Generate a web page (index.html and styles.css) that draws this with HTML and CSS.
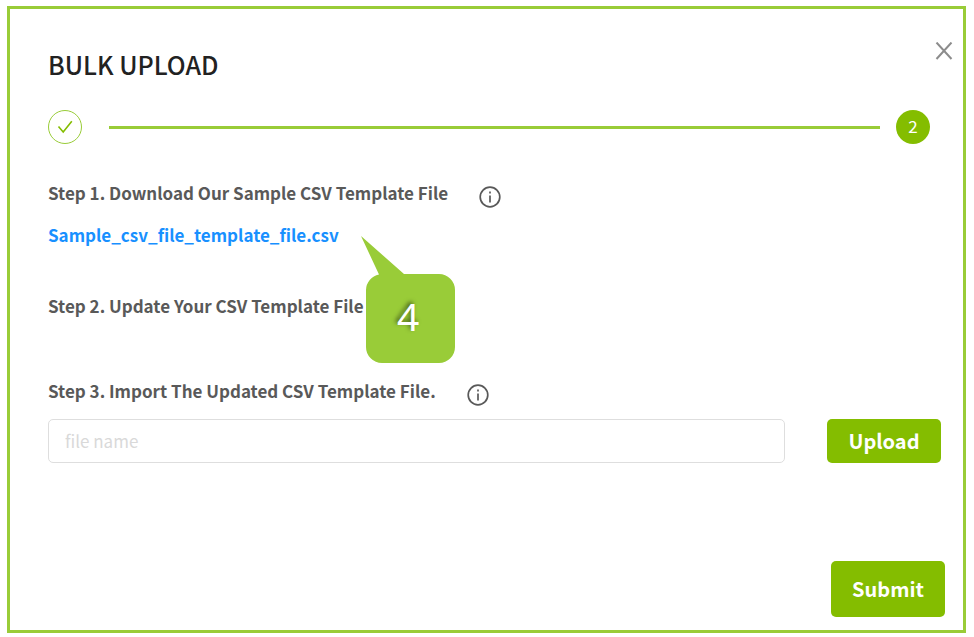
FILE: index.html
```html
<!DOCTYPE html>
<html lang="en">
<head>
    <meta charset="UTF-8">
    <meta name="viewport" content="width=device-width, initial-scale=1.0">
    <title>Bulk Upload</title>
    <link rel="stylesheet" href="styles.css">
</head>
<body>
    <main class="modal">
        <header class="modal-header">
            <h1>BULK UPLOAD</h1>
            <button type="button" class="close" aria-label="Close">
                <svg width="18" height="18" viewBox="0 0 18 18"><path d="M1.5 0.5 L16.5 17 M16.5 0.5 L1.5 17"/></svg>
            </button>
        </header>

        <div class="stepper">
            <div class="step-dot done">
                <svg width="16" height="14" viewBox="0 0 16 14"><path d="M1.5 6.5 L6.2 12 L14.8 1.2"/></svg>
            </div>
            <div class="step-line"></div>
            <div class="step-dot current">2</div>
        </div>

        <form class="upload-form">
            <div class="step">
                <h2>Step 1. Download Our Sample CSV Template File</h2>
                <svg class="info" width="22" height="22" viewBox="0 0 22 22"><circle cx="11" cy="11" r="9.8"/><path d="M11 9.5 V16.5 M11 5.5 V7.5"/></svg>
            </div>
            <div class="sample">
                <a href="#">Sample_csv_file_template_file.csv</a>
                <div class="callout">
                    <svg width="94" height="127" viewBox="0 0 94 127"><path d="M0 0 L43 38 H78 A16 16 0 0 1 94 54 V111 A16 16 0 0 1 78 127 H21 A16 16 0 0 1 5 111 V54 A16 16 0 0 1 18 38.5 Z"/></svg>
                    <span>4</span>
                </div>
            </div>
            <div class="step step-two">
                <h2>Step 2. Update Your CSV Template File</h2>
            </div>
            <div class="step step-three">
                <h2><label for="file-name">Step 3. Import The Updated CSV Template File.</label></h2>
                <svg class="info" width="22" height="22" viewBox="0 0 22 22"><circle cx="11" cy="11" r="9.8"/><path d="M11 9.5 V16.5 M11 5.5 V7.5"/></svg>
            </div>
            <div class="file-row">
                <input type="text" id="file-name" placeholder="file name">
                <button type="button" class="btn">Upload</button>
            </div>
            <div class="actions">
                <button type="submit" class="btn btn-submit">Submit</button>
            </div>
        </form>
    </main>
</body>
</html>
```

FILE: styles.css
```css
* {
    box-sizing: border-box;
}
body {
    margin: 0;
    padding: 6px 8px 4px 7px;
    background: #ffffff;
    font-family: "Noto Sans CJK SC", "Open Sans", sans-serif;
    color: #595959;
}
.modal {
    min-height: calc(100vh - 10px);
    border: 3px solid #99cc38;
    padding: 33px 18px 13px 38px;
}
.modal-header {
    display: flex;
    justify-content: space-between;
    align-items: flex-start;
}
h1 {
    margin: 6px 0 0;
    font-size: 25px;
    font-weight: 500;
    line-height: 32px;
    color: #222222;
}
.close {
    display: flex;
    margin-right: -8px;
    padding: 0;
    border: 0;
    background: none;
    cursor: pointer;
}
.close path {
    fill: none;
    stroke: #8c8c8c;
    stroke-width: 2;
}
.stepper {
    display: flex;
    align-items: center;
    margin: 30px 15px 0 0;
}
.step-dot {
    display: flex;
    justify-content: center;
    align-items: center;
    width: 34px;
    height: 34px;
    border-radius: 50%;
}
.done {
    border: 1px solid #99cc38;
}
.done path {
    fill: none;
    stroke: #84bd00;
    stroke-width: 1.6;
}
.current {
    padding-bottom: 2px;
    background: #84bd00;
    color: #ffffff;
    font-size: 17px;
    line-height: 24px;
}
.step-line {
    flex: 1;
    height: 3px;
    margin: 0 16px 0 27px;
    background: #99cc38;
}
.upload-form {
    margin-top: 34px;
}
.step {
    display: flex;
    align-items: flex-start;
    gap: 31px;
}
h2 {
    margin: 0;
    font-size: 17px;
    font-weight: 700;
    line-height: 30px;
}
.info {
    margin-top: 8px;
    fill: none;
    stroke: #595959;
    stroke-width: 1.7;
}
.sample {
    display: flex;
    width: fit-content;
    position: relative;
    margin-top: 12px;
}
.sample a {
    color: #1890ff;
    font-size: 17px;
    font-weight: 700;
    line-height: 30px;
    text-decoration: none;
}
.step-two {
    margin-top: 41px;
}
.step-three {
    margin-top: 55px;
}
/* numbered marker pointing at the sample file */
.callout {
    position: absolute;
    top: 16px;
    left: calc(100% + 22px);
    width: 94px;
    height: 127px;
}
.callout svg {
    display: block;
    fill: #99cc38;
}
.callout span {
    position: absolute;
    inset: 38px 4px 0 5px;
    color: #ffffff;
    font-family: "Noto Sans", sans-serif;
    font-size: 39px;
    line-height: 84px;
    text-align: center;
    text-shadow: -2px -2px 4px rgba(0, 0, 0, 0.5);
}
.file-row {
    display: flex;
    gap: 42px;
    margin: 13px 4px 0 0;
}
.file-row input {
    flex: 1;
    min-width: 0;
    height: 44px;
    padding: 0 16px 2px;
    border: 1px solid #dedede;
    border-radius: 5px;
    font-family: inherit;
    font-size: 17px;
    color: #595959;
}
.file-row input::placeholder {
    color: #d9d9d9;
}
.btn {
    width: 114px;
    height: 44px;
    padding: 0 0 2px;
    border: 0;
    border-radius: 5px;
    background: #84bd00;
    color: #ffffff;
    font-family: inherit;
    font-size: 20px;
    font-weight: 700;
    cursor: pointer;
}
.actions {
    display: flex;
    justify-content: flex-end;
    margin-top: 98px;
}
.btn-submit {
    height: 56px;
}
```
